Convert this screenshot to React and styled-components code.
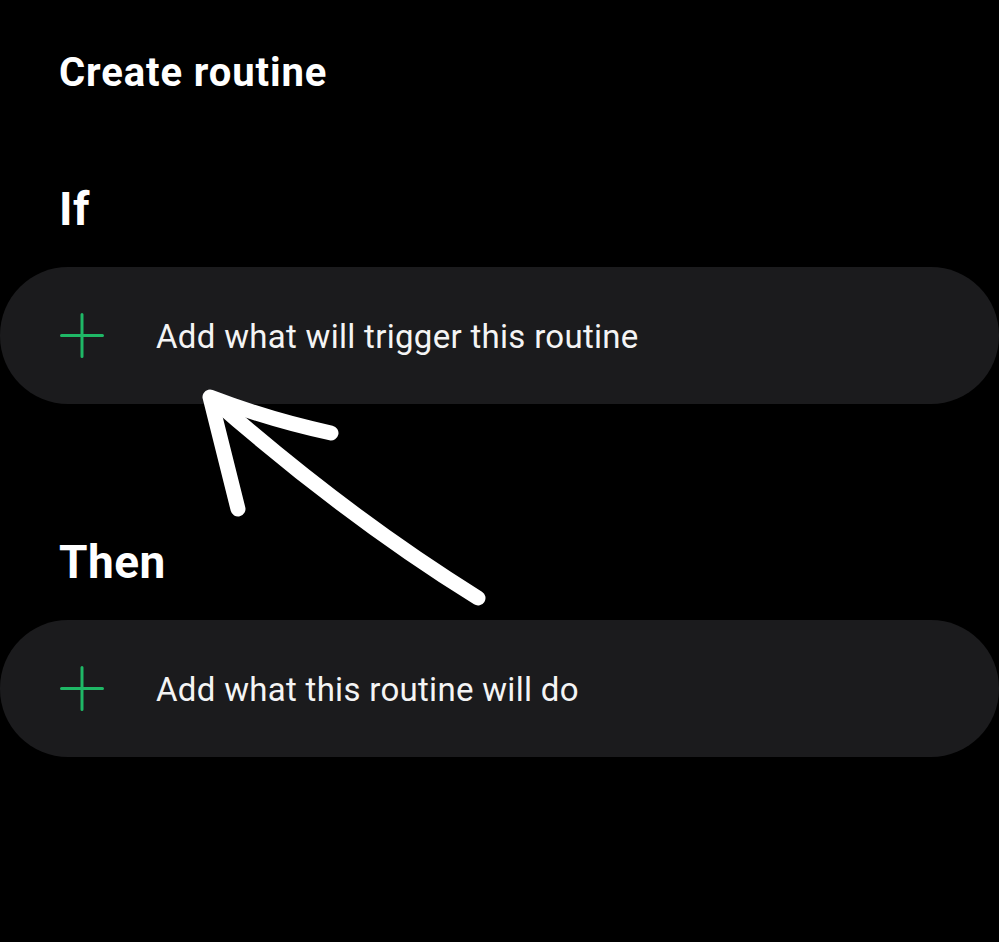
import React from 'react';
import styled, { createGlobalStyle } from 'styled-components';

const GlobalStyle = createGlobalStyle`
    html, body {
        margin: 0;
        padding: 0;
        background: #000000;
    }
    body {
        font-family: Roboto, "Noto Sans", sans-serif;
        color: #ffffff;
    }
`;

const Page = styled.div`
    position: relative;
    width: 999px;
    min-height: 942px;
    background: #000000;
    overflow: hidden;
`;

const Title = styled.h1`
    margin: 0;
    padding: 49px 0 0 59px;
    font-size: 40px;
    line-height: 48px;
    font-weight: 700;
    letter-spacing: 0.9px;
`;

const SectionLabel = styled.h2`
    margin: ${props => props.top}px 0 0 0;
    padding-left: 59px;
    font-size: 46px;
    line-height: 54px;
    font-weight: 700;
    letter-spacing: 0.5px;
`;

const ActionCard = styled.div`
    display: flex;
    align-items: center;
    gap: 52px;
    height: 137px;
    margin-top: 31px;
    padding-left: 60px;
    border-radius: 68px;
    background: #1b1b1d;
    box-sizing: border-box;
`;

const CardText = styled.span`
    font-size: 33px;
    line-height: 40px;
    font-weight: 400;
    letter-spacing: 0.3px;
    color: #f4f4f4;
    padding-top: 2px;
`;

const PlusIcon = () => (
    <svg width="44" height="45" viewBox="0 0 44 45">
        <path d="M22 1.5 V43.5 M1.5 22.5 H42.5" stroke="#1fb866" strokeWidth="3" strokeLinecap="round" fill="none" />
    </svg>
);

const Annotation = styled.svg`
    position: absolute;
    left: 0;
    top: 0;
    pointer-events: none;
`;

const Arrow = () => (
    <Annotation width="999" height="942" viewBox="0 0 999 942">
        <g stroke="#ffffff" strokeWidth="15" strokeLinecap="round" strokeLinejoin="round" fill="none">
            <path d="M478 598 Q346 516 214 400" />
            <path d="M238 509 Q226 460 210 397 Q270 420 331 433" />
        </g>
    </Annotation>
);

const App = () => {
    return (
        <>
            <GlobalStyle />
            <Page>
                <Title>Create routine</Title>
                <SectionLabel top={85}>If</SectionLabel>
                <ActionCard>
                    <PlusIcon />
                    <CardText>Add what will trigger this routine</CardText>
                </ActionCard>
                <SectionLabel top={131}>Then</SectionLabel>
                <ActionCard>
                    <PlusIcon />
                    <CardText>Add what this routine will do</CardText>
                </ActionCard>
                <Arrow />
            </Page>
        </>
    );
};

export default App;
